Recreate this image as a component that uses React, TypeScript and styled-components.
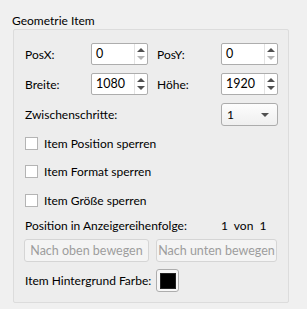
import React from "react";
import styled, { createGlobalStyle } from "styled-components";

const GlobalStyle = createGlobalStyle`
  html, body {
    margin: 0;
    padding: 0;
    background: #f0f0f0;
  }
  body {
    font-family: Lato, "Noto Sans", sans-serif;
    font-size: 12px;
    color: #000;
  }
`;

const Panel = styled.div`
  width: 307px;
  height: 309px;
  box-sizing: border-box;
  padding: 13px 0 0 12px;
  background: #f0f0f0;
`;

const Title = styled.div`
  height: 16px;
  line-height: 16px;
`;

const Group = styled.div`
  box-sizing: border-box;
  margin-left: 1px;
  width: 276px;
  height: 274px;
  border: 1px solid #dcdcdc;
  border-radius: 2px;
  background: #ededed;
  padding: 9px 0 0 11px;
  display: flex;
  flex-direction: column;
`;

const Row = styled.div<{ $h: number; $gap?: number; $shift?: number }>`
  height: ${(p) => p.$h}px;
  display: flex;
  align-items: center;
  gap: ${(p) => p.$gap ?? 0}px;
  margin-left: ${(p) => p.$shift ?? 0}px;
`;

const Label = styled.span<{ $w?: number; $pl?: number }>`
  box-sizing: border-box;
  width: ${(p) => (p.$w ? `${p.$w}px` : "auto")};
  padding-left: ${(p) => p.$pl ?? 0}px;
  flex: none;
  white-space: nowrap;
`;

const Spin = styled.div`
  box-sizing: border-box;
  width: 57px;
  height: 22px;
  display: flex;
  background: #fff;
  border: 1px solid #adadad;
  border-radius: 2px;
  flex: none;
`;

const SpinText = styled.span`
  flex: 1;
  padding-left: 4px;
  line-height: 20px;
  font-size: 12.5px;
`;

const SpinArrows = styled.div`
  width: 12px;
  border-left: 1px solid #e3e3e3;
  display: flex;
  flex-direction: column;
  align-items: center;
  justify-content: center;
  gap: 4px;
`;

const Tri = styled.span<{ $down?: boolean; $off?: boolean }>`
  width: 0;
  height: 0;
  border-left: 4px solid transparent;
  border-right: 4px solid transparent;
  ${(p) =>
    p.$down
      ? `border-top: 4px solid ${p.$off ? "#b4b4b4" : "#505050"};`
      : `border-bottom: 4px solid ${p.$off ? "#b4b4b4" : "#505050"};`}
`;

const Combo = styled.div`
  box-sizing: border-box;
  width: 57px;
  height: 23px;
  border: 1px solid #acacac;
  border-radius: 3px;
  background: linear-gradient(#fdfdfd, #efefef);
  display: flex;
  align-items: center;
  justify-content: space-between;
  padding: 0 8px 0 5px;
  flex: none;
`;

const Check = styled.span`
  box-sizing: border-box;
  width: 13px;
  height: 13px;
  border: 1px solid #b4b4b4;
  background: #fff;
  margin-right: 6px;
  flex: none;
`;

const Button = styled.div<{ $w: number }>`
  box-sizing: border-box;
  width: ${(p) => p.$w}px;
  height: 23px;
  border: 1px solid #d5d5d5;
  border-radius: 3px;
  background: #f4f4f4;
  color: #9d9d9d;
  font-size: 12.5px;
  display: flex;
  align-items: center;
  justify-content: center;
  white-space: nowrap;
  flex: none;
`;

const ColorButton = styled.div`
  box-sizing: border-box;
  width: 23px;
  height: 23px;
  border: 1px solid #adadad;
  border-radius: 3px;
  background: #f6f6f6;
  display: flex;
  align-items: center;
  justify-content: center;
`;

const Swatch = styled.span<{ $c: string }>`
  width: 16px;
  height: 16px;
  background: ${(p) => p.$c};
  box-sizing: border-box;
  border: 1px solid #222;
`;

function SpinBox({ value, atMin }: { value: string; atMin?: boolean }) {
  return (
    <Spin>
      <SpinText>{value}</SpinText>
      <SpinArrows>
        <Tri />
        <Tri $down $off={atMin} />
      </SpinArrows>
    </Spin>
  );
}

export default function App() {
  return (
    <>
      <GlobalStyle />
      <Panel>
        <Title>Geometrie Item</Title>
        <Group>
          <Row $h={30}>
            <Label $w={66}>PosX:</Label>
            <SpinBox value="0" atMin />
            <Label $w={73} $pl={9}>PosY:</Label>
            <SpinBox value="0" atMin />
          </Row>
          <Row $h={30}>
            <Label $w={66}>Breite:</Label>
            <SpinBox value="1080" />
            <Label $w={73} $pl={9}>Höhe:</Label>
            <SpinBox value="1920" />
          </Row>
          <Row $h={31}>
            <Label $w={196}>Zwischenschritte:</Label>
            <Combo>
              <span>1</span>
              <Tri $down />
            </Combo>
          </Row>
          <Row $h={27}>
            <Check />
            <Label>Item Position sperren</Label>
          </Row>
          <Row $h={29}>
            <Check />
            <Label>Item Format sperren</Label>
          </Row>
          <Row $h={29}>
            <Check />
            <Label>Item Größe sperren</Label>
          </Row>
          <Row $h={20}>
            <Label $w={196}>Position in Anzeigereihenfolge:</Label>
            <Label>1&nbsp; von&nbsp; 1</Label>
          </Row>
          <Row $h={31} $gap={7} $shift={-1}>
            <Button $w={125}>Nach oben bewegen</Button>
            <Button $w={121}>Nach unten bewegen</Button>
          </Row>
          <Row $h={29}>
            <Label $w={131}>Item Hintergrund Farbe:</Label>
            <ColorButton>
              <Swatch $c="#000" />
            </ColorButton>
          </Row>
        </Group>
      </Panel>
    </>
  );
}
